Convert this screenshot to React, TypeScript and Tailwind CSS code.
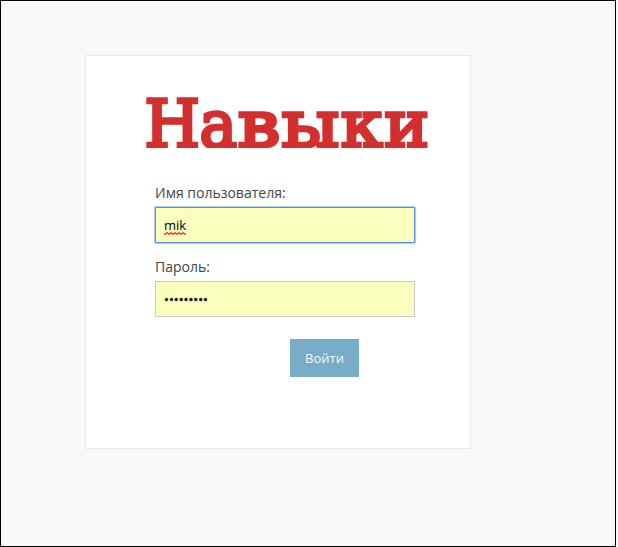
import React from 'react';

const letters = [
  { char: 'Н', x: -1.5, width: 55.5 },
  { char: 'а', x: 53.5, width: 37.5 },
  { char: 'в', x: 91.8, width: 42.5 },
  { char: 'ы', x: 135.5, width: 57.8 },
  { char: 'к', x: 194.7, width: 42 },
  { char: 'и', x: 238.3, width: 45 },
];

function Logo() {
  return (
    <svg className="ml-[60px] mt-[36px] block h-[56px] w-[284px] overflow-visible" viewBox="0 0 284 56" aria-label="Навыки">
      <defs>
        <clipPath id="baseline">
          <rect x="-4" y="0" width="286" height="56" />
        </clipPath>
      </defs>
      <g clipPath="url(#baseline)">
        <text
          y="55"
          className="fill-[#d32f2f] stroke-[#d32f2f] stroke-[3.5px] font-['DejaVu_Serif',serif] text-[65.5px] font-normal"
        >
          {letters.map((letter) => (
            <tspan key={letter.char} x={letter.x} textLength={letter.width} lengthAdjust="spacingAndGlyphs">
              {letter.char}
            </tspan>
          ))}
        </text>
      </g>
    </svg>
  );
}

export default function App() {
  return (
    <div className="h-[547px] w-[618px] bg-[#f8f8f8] font-['Open_Sans',sans-serif]">
      <div className="flex h-full w-[616px] items-start border border-black pl-[84px] pt-[54px]">
        <main className="h-[394px] w-[386px] border border-[#e8e8e8] bg-white">
          <Logo />
          <form className="ml-[69px] mt-[35px] flex w-[260px] flex-col text-[14px] text-[#444]">
            <label className="h-[24px] leading-5">Имя пользователя:</label>
            <div className="flex h-[36px] items-center rounded-[1px] border border-[#5b8fdc] bg-[#faffbd] px-2 pt-[2px] text-[13px] text-black shadow-[0_0_1px_1px_#a9c8f5]">
              <span className="relative">
                mik
                <svg className="absolute bottom-[1px] left-0 h-[3px] w-[22px]" viewBox="0 0 22 3" fill="none" stroke="#ff1a10" strokeWidth="1.2">
                  <path d="M0 2.2 1 2.2 3 .8 5 2.2 7 .8 9 2.2 11 .8 13 2.2 15 .8 17 2.2 19 .8 21 2.2 22 1.5" />
                </svg>
              </span>
            </div>
            <label className="mt-[14px] h-[24px] leading-5">Пароль:</label>
            <div className="flex h-[36px] items-center border border-[#c8c8c8] bg-[#faffbd] px-2 pt-[2px] text-[13px] text-black [-webkit-text-stroke:0.4px_black]">
              •••••••••
            </div>
            <button type="button" className="ml-[135px] mt-[22px] h-[38px] w-[69px] bg-[#78adc8] pt-[2px] text-[13px] text-[#f2f8fb]">
              Войти
            </button>
          </form>
        </main>
      </div>
    </div>
  );
}
